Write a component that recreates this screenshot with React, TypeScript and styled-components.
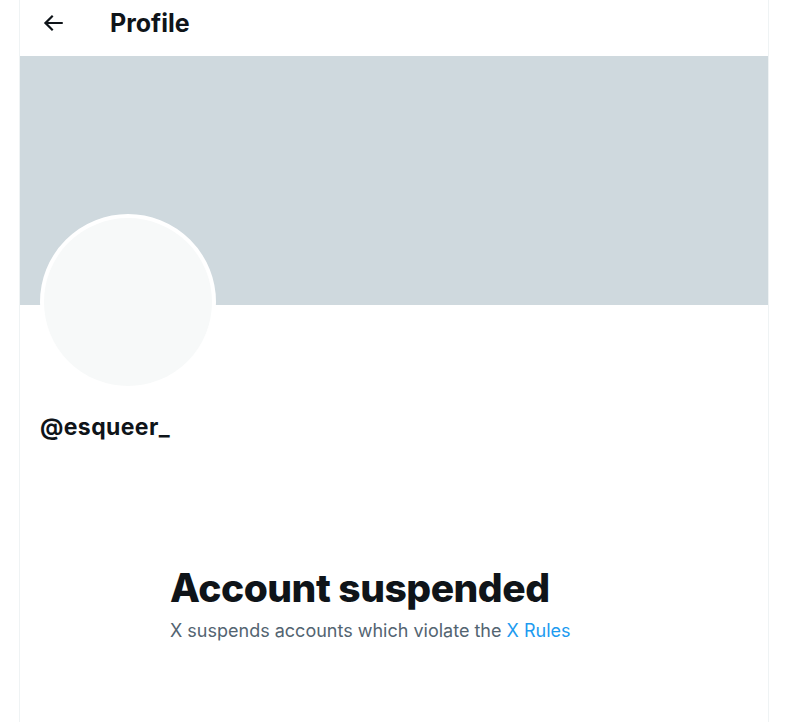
import React from "react";
import styled, { createGlobalStyle } from "styled-components";

const GlobalStyle = createGlobalStyle`
  body {
    margin: 0;
    background: #ffffff;
    font-family: Inter, "Noto Sans", "Liberation Sans", sans-serif;
    color: #0f1419;
  }
`;

const Column = styled.main`
  margin-left: 19px;
  width: 748px;
  min-height: 722px;
  border-left: 1px solid #eff3f4;
  border-right: 1px solid #eff3f4;
  display: flex;
  flex-direction: column;
`;

const Header = styled.header`
  height: 56px;
  display: flex;
  align-items: center;
  padding-left: 19px;
  gap: 43px;
`;

const BackButton = styled.button`
  width: 28px;
  height: 28px;
  border: none;
  background: none;
  padding: 0;
  margin-top: -10px;
  display: flex;
  align-items: center;
  justify-content: center;
  color: #0f1419;
  cursor: pointer;
`;

const Title = styled.h2`
  margin: -10px 0 0;
  font-size: 25px;
  font-weight: 700;
  letter-spacing: 0;
`;

const Banner = styled.div`
  height: 249px;
  background: #cfd9de;
`;

const AvatarRow = styled.div`
  padding-left: 20px;
  margin-top: -91px;
`;

const Avatar = styled.div`
  width: 168px;
  height: 168px;
  border-radius: 50%;
  border: 4px solid #ffffff;
  background: #f7f9f9;
`;

const Handle = styled.div`
  padding: 23px 0 0 20px;
  font-size: 23px;
  font-weight: 700;
  letter-spacing: 0.4px;
`;

const Suspended = styled.section`
  padding: 124px 0 0 150px;
`;

const SuspendedTitle = styled.h1`
  margin: 0;
  font-size: 39px;
  line-height: 46px;
  font-weight: 800;
  letter-spacing: -0.5px;
`;

const SuspendedText = styled.p`
  margin: 8px 0 0;
  font-size: 18px;
  line-height: 24px;
  color: #536471;
`;

const Link = styled.a`
  color: #1d9bf0;
  text-decoration: none;
`;

export default function App() {
  return (
    <>
      <GlobalStyle />
      <Column>
        <Header>
          <BackButton aria-label="Back">
            <svg width="26" height="26" viewBox="0 0 24 24" fill="currentColor">
              <path d="M7.414 13l5.043 5.04-1.414 1.42L3.586 12l7.457-7.46 1.414 1.42L7.414 11H21v2H7.414z" />
            </svg>
          </BackButton>
          <Title>Profile</Title>
        </Header>
        <Banner />
        <AvatarRow>
          <Avatar />
        </AvatarRow>
        <Handle>@esqueer_</Handle>
        <Suspended>
          <SuspendedTitle>Account suspended</SuspendedTitle>
          <SuspendedText>
            X suspends accounts which violate the <Link href="#">X Rules</Link>
          </SuspendedText>
        </Suspended>
      </Column>
    </>
  );
}
